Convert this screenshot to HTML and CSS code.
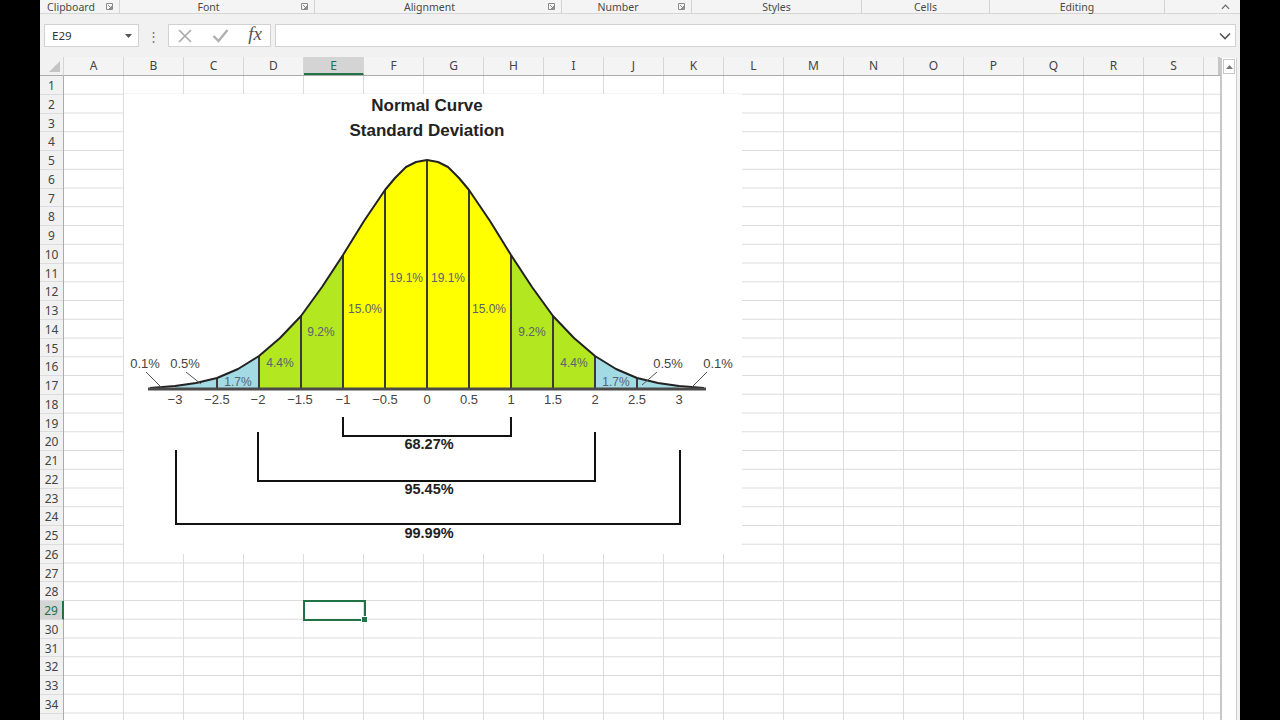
FILE: index.html
```html
<!DOCTYPE html>
<html lang="en">
<head>
  <meta charset="UTF-8">
  <title>Normal Curve - Excel</title>
  <link rel="stylesheet" href="styles.css">
</head>
<body>
  <div class="screen">
    <div class="app">
      <!-- ribbon group captions -->
      <div class="ribbon-groups">
        <div class="group g-clipboard"><span class="group-name">Clipboard</span><svg class="launcher" viewBox="0 0 7 7"><path d="M0.5 0.5H6.5V6.5H0.5Z M2 2L5.5 5.5 M5.5 3V5.5H3"/></svg></div>
        <div class="group g-font"><span class="group-name">Font</span><svg class="launcher" viewBox="0 0 7 7"><path d="M0.5 0.5H6.5V6.5H0.5Z M2 2L5.5 5.5 M5.5 3V5.5H3"/></svg></div>
        <div class="group g-align"><span class="group-name">Alignment</span><svg class="launcher" viewBox="0 0 7 7"><path d="M0.5 0.5H6.5V6.5H0.5Z M2 2L5.5 5.5 M5.5 3V5.5H3"/></svg></div>
        <div class="group g-number"><span class="group-name">Number</span><svg class="launcher" viewBox="0 0 7 7"><path d="M0.5 0.5H6.5V6.5H0.5Z M2 2L5.5 5.5 M5.5 3V5.5H3"/></svg></div>
        <div class="group g-styles"><span class="group-name">Styles</span></div>
        <div class="group g-cells"><span class="group-name">Cells</span></div>
        <div class="group g-editing"><span class="group-name">Editing</span></div>
        <div class="collapse"><svg viewBox="0 0 10 6"><path d="M1 5L5 1L9 5"/></svg></div>
      </div>

      <!-- formula bar -->
      <div class="formula-bar">
        <div class="name-box"><span>E29</span><svg class="nb-arrow" viewBox="0 0 7 4"><path d="M0 0H7L3.5 4Z"/></svg></div>
        <div class="bar-dots">⋮</div>
        <div class="fx-buttons">
          <svg class="fx-icon" viewBox="0 0 16 16"><path d="M2 2L14 14M14 2L2 14"/></svg>
          <svg class="fx-icon" viewBox="0 0 18 16"><path d="M2 8L7 13L16 2"/></svg>
          <span class="fx">fx</span>
        </div>
        <div class="formula-input"><svg class="expand" viewBox="0 0 12 8"><path d="M1 1.5L6 6.5L11 1.5"/></svg></div>
      </div>

      <!-- sheet -->
      <div class="sheet">
        <div class="corner"><svg viewBox="0 0 12 12"><path d="M12 0V12H0Z"/></svg></div>
        <div class="col-heads">
          <div class="ch">A</div><div class="ch">B</div><div class="ch">C</div><div class="ch">D</div>
          <div class="ch ch-active">E</div><div class="ch">F</div><div class="ch">G</div><div class="ch">H</div>
          <div class="ch">I</div><div class="ch">J</div><div class="ch">K</div><div class="ch">L</div>
          <div class="ch">M</div><div class="ch">N</div><div class="ch">O</div><div class="ch">P</div>
          <div class="ch">Q</div><div class="ch">R</div><div class="ch">S</div><div class="ch ch-part"></div>
        </div>
        <div class="vscroll">
          <div class="scroll-up"><svg viewBox="0 0 7 4"><path d="M0 4H7L3.5 0Z"/></svg></div>
        </div>
        <div class="row-heads">
          <div class="rh">1</div><div class="rh">2</div><div class="rh">3</div><div class="rh">4</div><div class="rh">5</div>
          <div class="rh">6</div><div class="rh">7</div><div class="rh">8</div><div class="rh">9</div><div class="rh">10</div>
          <div class="rh">11</div><div class="rh">12</div><div class="rh">13</div><div class="rh">14</div><div class="rh">15</div>
          <div class="rh">16</div><div class="rh">17</div><div class="rh">18</div><div class="rh">19</div><div class="rh">20</div>
          <div class="rh">21</div><div class="rh">22</div><div class="rh">23</div><div class="rh">24</div><div class="rh">25</div>
          <div class="rh">26</div><div class="rh">27</div><div class="rh">28</div><div class="rh rh-active">29</div><div class="rh">30</div>
          <div class="rh">31</div><div class="rh">32</div><div class="rh">33</div><div class="rh">34</div><div class="rh"></div>
        </div>
        <div class="cells">
          <svg class="chart" viewBox="124 94 618 460" width="618" height="460">
            <text class="title" x="427" y="111">Normal Curve</text>
            <text class="title" x="427" y="136">Standard Deviation</text>

            <polygon class="band-blue" points="175,389 175,386 196,383 217,378 238,369 259,356 259,389"/>
            <polygon class="band-green" points="259,389 259,356 280,338 301,316 322,287 343,255 343,389"/>
            <polygon class="band-yellow" points="343,389 343,255 364,221 385,190 395,178 406,167 416,162 427,160 438,162 448,167 459,178 469,190 490,221 511,255 511,389"/>
            <polygon class="band-green" points="511,389 511,255 532,287 553,316 574,338 595,356 595,389"/>
            <polygon class="band-blue" points="595,389 595,356 616,369 637,378 658,383 679,386 679,389"/>

            <g class="dividers">
              <line x1="217" y1="389" x2="217" y2="378"/>
              <line x1="259" y1="389" x2="259" y2="356"/>
              <line x1="301" y1="389" x2="301" y2="316"/>
              <line x1="343" y1="389" x2="343" y2="255"/>
              <line x1="385" y1="389" x2="385" y2="190"/>
              <line x1="427" y1="389" x2="427" y2="160"/>
              <line x1="469" y1="389" x2="469" y2="190"/>
              <line x1="511" y1="389" x2="511" y2="255"/>
              <line x1="553" y1="389" x2="553" y2="316"/>
              <line x1="595" y1="389" x2="595" y2="356"/>
              <line x1="637" y1="389" x2="637" y2="378"/>
            </g>

            <polyline class="curve" points="150,388 175,386 196,383 217,378 238,369 259,356 280,338 301,316 322,287 343,255 364,221 385,190 395,178 406,167 416,162 427,160 438,162 448,167 459,178 469,190 490,221 511,255 532,287 553,316 574,338 595,356 616,369 637,378 658,383 679,386 704,388"/>
            <line class="axis" x1="148" y1="389" x2="706" y2="389"/>

            <g class="ticks">
              <text x="175" y="404">−3</text>
              <text x="217" y="404">−2.5</text>
              <text x="258" y="404">−2</text>
              <text x="300" y="404">−1.5</text>
              <text x="343" y="404">−1</text>
              <text x="385" y="404">−0.5</text>
              <text x="427" y="404">0</text>
              <text x="469" y="404">0.5</text>
              <text x="511" y="404">1</text>
              <text x="553" y="404">1.5</text>
              <text x="595" y="404">2</text>
              <text x="637" y="404">2.5</text>
              <text x="679" y="404">3</text>
            </g>

            <g class="pct">
              <text x="406" y="282">19.1%</text>
              <text x="448" y="282">19.1%</text>
              <text x="365" y="313">15.0%</text>
              <text x="489" y="313">15.0%</text>
              <text x="321" y="336">9.2%</text>
              <text x="532" y="336">9.2%</text>
              <text x="280" y="367">4.4%</text>
              <text x="574" y="367">4.4%</text>
              <text x="238" y="386">1.7%</text>
              <text x="616" y="386">1.7%</text>
            </g>

            <g class="pct-out">
              <text x="145" y="368">0.1%</text>
              <text x="185" y="368">0.5%</text>
              <text x="668" y="368">0.5%</text>
              <text x="718" y="368">0.1%</text>
            </g>
            <g class="leaders">
              <line x1="146" y1="372" x2="162" y2="388"/>
              <line x1="186" y1="372" x2="201" y2="384"/>
              <line x1="657" y1="372" x2="642" y2="385"/>
              <line x1="707" y1="372" x2="692" y2="387"/>
            </g>

            <path class="bracket" d="M343 417V436H511V417"/>
            <text class="range" x="429" y="449">68.27%</text>
            <path class="bracket" d="M258 432V481H595V432"/>
            <text class="range" x="429" y="494">95.45%</text>
            <path class="bracket" d="M176 450V524H680V450"/>
            <text class="range" x="429" y="538">99.99%</text>
          </svg>
          <div class="selection"><span class="fill-handle"></span></div>
        </div>
      </div>
    </div>
  </div>
</body>
</html>
```

FILE: styles.css
```css
body {
  margin: 0;
  background: #000;
  font-family: "Noto Sans", "Open Sans", sans-serif;
}
.screen {
  width: 1280px;
  height: 720px;
  overflow: hidden;
}
.app {
  margin-left: 40px;
  width: 1200px;
  height: 720px;
  background: #f1f1f1;
  display: flex;
  flex-direction: column;
}

/* ribbon captions */
.ribbon-groups {
  height: 13px;
  display: flex;
  border-bottom: 1px solid #d6d6d6;
  background: #f4f4f4;
  font-size: 10.5px;
  line-height: 12px;
  color: #4a4a4a;
}
.group {
  display: flex;
  align-items: center;
  border-right: 1px solid #d4d4d4;
  height: 13px;
  box-sizing: border-box;
}
.group-name {
  flex: 1;
  text-align: center;
}
.launcher {
  width: 7px;
  height: 7px;
  margin: 0 6px 0 4px;
  fill: none;
  stroke: #8a8a8a;
  stroke-width: 1;
}
.g-clipboard { width: 80px; }
.g-font { width: 195px; }
.g-align { width: 247px; }
.g-number { width: 130px; }
.g-styles { width: 170px; }
.g-cells { width: 128px; }
.g-editing { width: 175px; }
.collapse {
  flex: 1;
  display: flex;
  justify-content: flex-end;
  align-items: center;
  padding-right: 10px;
}
.collapse svg {
  width: 9px;
  height: 6px;
  fill: none;
  stroke: #666;
  stroke-width: 1.3;
}

/* formula bar */
.formula-bar {
  height: 43px;
  display: flex;
  align-items: center;
  padding: 0 4px;
}
.name-box, .fx-buttons, .formula-input {
  height: 23px;
  box-sizing: border-box;
  background: #fff;
  border: 1px solid #d2d2d2;
  display: flex;
  align-items: center;
}
.name-box {
  width: 95px;
  padding: 0 6px 0 7px;
  justify-content: space-between;
  font-size: 11.5px;
  color: #333;
}
.nb-arrow {
  width: 7px;
  height: 4px;
  fill: #555;
}
.bar-dots {
  width: 29px;
  text-align: center;
  color: #777;
  font-size: 13px;
}
.fx-buttons {
  width: 103px;
  padding: 0 8px 0 8px;
  justify-content: space-between;
}
.fx-icon {
  width: 16px;
  height: 16px;
  fill: none;
  stroke: #a9a9a9;
  stroke-width: 1.6;
}
.fx-icon + .fx-icon {
  width: 19px;
  stroke: #b0b0b0;
  stroke-width: 2.4;
}
.fx {
  font-family: "Liberation Serif", serif;
  font-style: italic;
  font-size: 19px;
  color: #555;
  margin-top: -3px;
}
.formula-input {
  flex: 1;
  margin-left: 4px;
  justify-content: flex-end;
  padding-right: 4px;
}
.expand {
  width: 12px;
  height: 8px;
  fill: none;
  stroke: #555;
  stroke-width: 1.6;
}

/* sheet */
.sheet {
  flex: 1;
  display: grid;
  grid-template-columns: 24px 1156px 17px;
  grid-template-rows: 19px 1fr;
  overflow: hidden;
}
.corner {
  background: #f1f1f1;
  border-bottom: 1px solid #ababab;
  border-right: 1px solid #d4d4d4;
  box-sizing: border-box;
  display: flex;
  align-items: flex-end;
  justify-content: flex-end;
  padding: 0 3px 3px 0;
}
.corner svg {
  width: 11px;
  height: 11px;
  fill: #c4c4c4;
}
.col-heads {
  display: flex;
  background: #f4f4f4;
  border-bottom: 1px solid #ababab;
  box-sizing: border-box;
}
.ch {
  width: 60px;
  flex: none;
  border-right: 1px solid #d6d6d6;
  box-sizing: border-box;
  text-align: center;
  font-size: 12px;
  line-height: 18px;
  color: #444;
}
.ch-active {
  background: #d4d4d4;
  color: #217346;
  border-bottom: 2px solid #217346;
  line-height: 17px;
}
.ch-part {
  width: 16px;
  border-right: 2px solid #c6c6c6;
}
.vscroll {
  grid-column: 3;
  grid-row: 1 / 3;
  margin-top: 1px;
  background: #fff;
  border-left: 2px solid #c8c8c8;
  border-right: 1px solid #d0d0d0;
  box-sizing: border-box;
  padding: 1px 1px 0 1px;
}
.scroll-up {
  height: 13px;
  border: 1px solid #c8c8c8;
  display: flex;
  align-items: center;
  justify-content: center;
}
.scroll-up svg {
  width: 7px;
  height: 4px;
  fill: #777;
}
.row-heads {
  display: flex;
  flex-direction: column;
  background: #f1f1f1;
  border-right: 1px solid #ababab;
}
.rh {
  height: 18.75px;
  flex: none;
  box-sizing: border-box;
  border-bottom: 1px solid #dcdcdc;
  text-align: center;
  font-size: 12px;
  line-height: 19px;
  color: #444;
}
.rh-active {
  background: #d4d4d4;
  color: #217346;
  margin-right: -1px;
  border-right: 2px solid #217346;
}
.cells {
  position: relative;
  background-color: #fff;
  background-image:
    linear-gradient(to right, #dcdcdc 1px, transparent 1px),
    linear-gradient(to bottom, #dcdcdc 1px, transparent 1px);
  background-size: 60px 100%, 100% 18.75px;
  background-position: -1px 0, 0 -1px;
}
.selection {
  position: absolute;
  left: 239px;
  top: 524px;
  width: 63px;
  height: 21px;
  box-sizing: border-box;
  border: 2px solid #217346;
}
.fill-handle {
  position: absolute;
  right: -4px;
  bottom: -4px;
  width: 5px;
  height: 5px;
  background: #217346;
  border: 1px solid #fff;
}

/* chart picture */
.chart {
  position: absolute;
  left: 60px;
  top: 18px;
  background: #fff;
  font-family: "Liberation Sans", Arial, sans-serif;
}
.title {
  font-size: 17px;
  font-weight: bold;
  fill: #222;
  text-anchor: middle;
}
.band-yellow { fill: #ffff00; }
.band-green { fill: #b3e720; }
.band-blue { fill: #a2dbe3; }
.dividers line {
  stroke: #3a3a3a;
  stroke-width: 2;
}
.curve {
  fill: none;
  stroke: #222;
  stroke-width: 2;
  stroke-linejoin: round;
}
.axis {
  stroke: #4a4a4a;
  stroke-width: 3;
}
.ticks text {
  font-size: 13px;
  fill: #444;
  text-anchor: middle;
}
.pct text {
  font-size: 12px;
  fill: #5a6170;
  text-anchor: middle;
}
.pct-out text {
  font-size: 13px;
  fill: #444;
  text-anchor: middle;
}
.leaders line {
  stroke: #555;
  stroke-width: 1;
}
.bracket {
  fill: none;
  stroke: #111;
  stroke-width: 2;
}
.range {
  font-size: 14.5px;
  font-weight: bold;
  fill: #222;
  text-anchor: middle;
}
```
